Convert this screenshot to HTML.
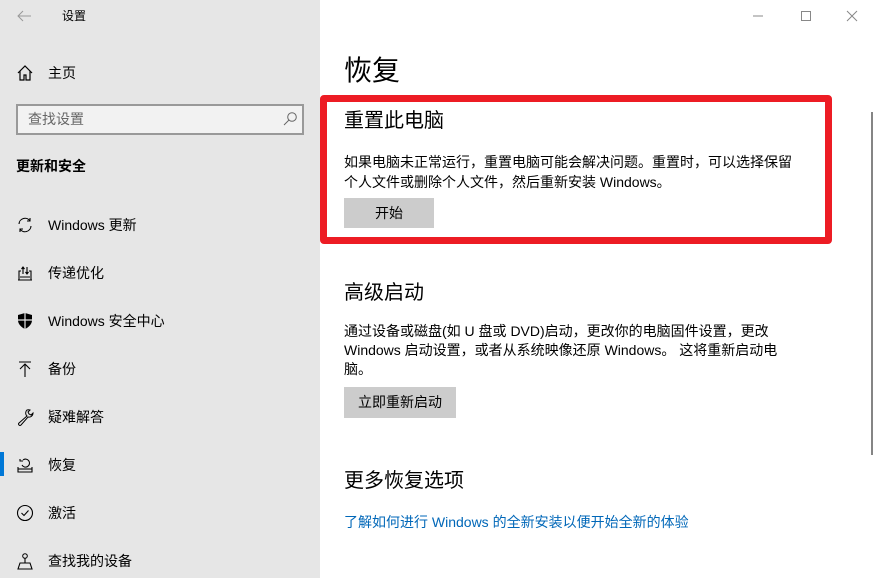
<!DOCTYPE html>
<html><head><meta charset="utf-8"><style>
*{margin:0;padding:0;box-sizing:border-box}
body{width:873px;height:578px;overflow:hidden;background:#fff;font-family:"Liberation Sans","Noto Sans CJK SC","Microsoft YaHei",sans-serif;color:#000;position:relative}
.a{position:absolute;white-space:nowrap}
#side{position:absolute;left:0;top:0;width:320px;height:578px;background:#e6e6e6}
.it{position:absolute;left:48px;font-size:14px;line-height:20px}
.ic{position:absolute;left:16px;width:18px;height:18px}
.t14{font-size:14px;line-height:20px}
.btn{position:absolute;background:#cccccc;font-size:14px;text-align:center}
</style></head><body>
<div id="side">
  <svg class="a" style="left:16px;top:8px" width="16" height="16" viewBox="0 0 16 16"><path d="M15 8H2M7 3L2 8l5 5" stroke="#999" stroke-width="1" fill="none"/></svg>
  <div class="a" style="left:62px;top:8px;font-size:12px;line-height:16px">设置</div>
  <svg class="ic" style="top:64px" viewBox="0 0 18 18"><path d="M2 9L9 2l7 7M4 7v9h4v-5h2v5h4V7" stroke="#000" stroke-width="1.2" fill="none"/></svg>
  <div class="it" style="top:63px">主页</div>
  <div class="a" style="left:16px;top:104px;width:288px;height:31px;border:2px solid #999;background:#f2f2f2"></div>
  <div class="a" style="left:28px;top:109px;font-size:14px;line-height:20px;color:#666">查找设置</div>
  <svg class="a" style="left:282px;top:111px" width="16" height="16" viewBox="0 0 16 16"><circle cx="10" cy="6" r="4.3" stroke="#666" fill="none"/><path d="M7 9l-5 5" stroke="#666"/></svg>
  <div class="a" style="left:16px;top:156px;font-size:14px;line-height:20px;font-weight:bold">更新和安全</div>
  <svg class="ic" style="top:216px" viewBox="0 0 18 18"><path d="M3 8a6 6 0 0 1 11-3M15 10a6 6 0 0 1-11 3M14 2v3h-3M4 16v-3h3" stroke="#000" stroke-width="1.1" fill="none"/></svg>
  <div class="it" style="top:215px">Windows 更新</div>
  <svg class="ic" style="top:264px" viewBox="0 0 18 18"><path d="M2 16h14M3 16V7h2M15 16V7h-2M7 3v7M5.5 5L7 3l1.5 2M11 3v7M9.5 8l1.5 2 1.5-2M4 13h10" stroke="#000" stroke-width="1.1" fill="none"/></svg>
  <div class="it" style="top:263px">传递优化</div>
  <svg class="ic" style="top:312px" viewBox="0 0 18 18"><path d="M9 1L2 3v5c0 4 3 7 7 9 4-2 7-5 7-9V3z" fill="#000"/><path d="M9 1v16M2 8h14" stroke="#e6e6e6" stroke-width="1.2"/></svg>
  <div class="it" style="top:311px">Windows 安全中心</div>
  <svg class="ic" style="top:360px" viewBox="0 0 18 18"><path d="M3 2h12M9 4v13M4 9l5-5 5 5" stroke="#000" stroke-width="1.1" fill="none"/></svg>
  <div class="it" style="top:359px">备份</div>
  <svg class="ic" style="top:408px" viewBox="0 0 18 18"><path d="M11 2a4 4 0 0 0 0 6L3 15a1.4 1.4 0 0 0 2 2l7-8a4 4 0 0 0 5-4l-2 2-2-1-1-2 2-2a4 4 0 0 0-3 0z" stroke="#000" stroke-width="1" fill="none"/></svg>
  <div class="it" style="top:407px">疑难解答</div>
  <div class="a" style="left:0;top:452px;width:4px;height:24px;background:#0078d7"></div>
  <svg class="ic" style="top:456px" viewBox="0 0 18 18"><path d="M2 11v5h14v-5M6 9a4 4 0 1 0 1-5M4 3v2h3" stroke="#000" stroke-width="1.1" fill="none"/><path d="M2 13h14" stroke="#000" stroke-width="1.1"/></svg>
  <div class="it" style="top:455px">恢复</div>
  <svg class="ic" style="top:504px" viewBox="0 0 18 18"><circle cx="9" cy="9" r="7.5" stroke="#000" stroke-width="1.1" fill="none"/><path d="M5.5 9l2.5 2.5 4.5-5" stroke="#000" stroke-width="1.1" fill="none"/></svg>
  <div class="it" style="top:503px">激活</div>
  <svg class="ic" style="top:552px" viewBox="0 0 18 18"><circle cx="9" cy="4" r="2.3" stroke="#000" fill="none"/><path d="M9 6v5M2 17l2-6h10l2 6z" stroke="#000" stroke-width="1.1" fill="none"/></svg>
  <div class="it" style="top:551px">查找我的设备</div>
</div>
<svg class="a" style="left:752px;top:10px" width="12" height="12"><path d="M1 6h10" stroke="#888"/></svg>
<svg class="a" style="left:800px;top:10px" width="12" height="12"><rect x="1.5" y="1.5" width="9" height="9" stroke="#888" fill="none"/></svg>
<svg class="a" style="left:846px;top:10px" width="12" height="12"><path d="M1 1l10 10M11 1L1 11" stroke="#888"/></svg>
<div class="a" style="left:871px;top:112px;width:2px;height:343px;background:#858585"></div>

<div class="a" style="left:344px;top:52px;font-size:28px;line-height:38px">恢复</div>
<div class="a" style="left:320px;top:95px;width:512px;height:149px;border:7px solid #ed1c24;border-radius:4px"></div>
<div class="a" style="left:344px;top:107px;font-size:20px;line-height:28px">重置此电脑</div>
<div class="a t14" style="left:344px;top:152px">如果电脑未正常运行，重置电脑可能会解决问题。重置时，可以选择保留<br>个人文件或删除个人文件，然后重新安装 Windows。</div>
<div class="btn" style="left:344px;top:198px;width:90px;height:30px;line-height:30px">开始</div>

<div class="a" style="left:344px;top:279px;font-size:20px;line-height:28px">高级启动</div>
<div class="a t14" style="left:344px;top:322px;line-height:19px">通过设备或磁盘(如 U 盘或 DVD)启动，更改你的电脑固件设置，更改<br>Windows 启动设置，或者从系统映像还原 Windows。 这将重新启动电<br>脑。</div>
<div class="btn" style="left:344px;top:387px;width:112px;height:31px;line-height:31px">立即重新启动</div>

<div class="a" style="left:344px;top:467px;font-size:20px;line-height:28px">更多恢复选项</div>
<div class="a t14" style="left:344px;top:512px;color:#0067b8">了解如何进行 Windows 的全新安装以便开始全新的体验</div>
</body></html>
